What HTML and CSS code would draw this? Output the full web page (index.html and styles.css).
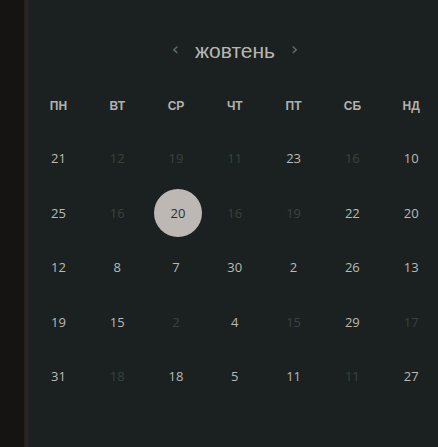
FILE: index.html
```html
<!DOCTYPE html>
<html lang="uk">
<head>
<meta charset="utf-8">
<link rel="stylesheet" href="styles.css">
</head>
<body>
<div class="sidebar"></div>
<div class="edge"></div>
<main class="panel">
  <div class="header">
    <span class="chev">&lsaquo;</span>
    <span class="month">жовтень</span>
    <span class="chev">&rsaquo;</span>
  </div>
  <div class="weekdays">
    <span>ПН</span><span>ВТ</span><span>СР</span><span>ЧТ</span><span>ПТ</span><span>СБ</span><span>НД</span>
  </div>
  <div class="days">
    <span>21</span><span class="dim">12</span><span class="dim">19</span><span class="dim">11</span><span>23</span><span class="dim">16</span><span>10</span>
    <span>25</span><span class="dim">16</span><span class="sel"><b>20</b></span><span class="dim">16</span><span class="dim">19</span><span>22</span><span>20</span>
    <span>12</span><span>8</span><span>7</span><span>30</span><span>2</span><span>26</span><span>13</span>
    <span>19</span><span>15</span><span class="dim">2</span><span>4</span><span class="dim">15</span><span>29</span><span class="dim">17</span>
    <span>31</span><span class="dim">18</span><span>18</span><span>5</span><span>11</span><span class="dim">11</span><span>27</span>
  </div>
</main>
</body>
</html>
```
FILE: styles.css
```css
html, body {
  margin: 0;
  height: 100%;
}
body {
  display: flex;
  background: #1a2120;
  overflow: hidden;
}
.sidebar {
  width: 24px;
  flex: none;
  background: #161412;
}
.edge {
  width: 5px;
  flex: none;
  background: linear-gradient(to right, #221f1d, #2a2726 60%, #1e2220);
}
.panel {
  flex: 1;
  min-width: 0;
  overflow: hidden;
  padding-top: 36px;
}
.header {
  width: 412px;
  height: 30px;
  display: flex;
  align-items: center;
  justify-content: center;
  gap: 16px;
}
.month {
  font-family: "Liberation Sans", Arial, sans-serif;
  font-size: 21px;
  color: #b9b6b1;
  line-height: 30px;
}
.chev {
  font-family: "DejaVu Sans", sans-serif;
  font-size: 18px;
  color: #6a6e6b;
  line-height: 30px;
  margin-top: -4px;
}
.weekdays, .days {
  width: 412px;
  display: grid;
  grid-template-columns: repeat(7, 58.8px);
}
.weekdays {
  margin-top: 28px;
  height: 24px;
  align-items: center;
  justify-items: center;
  font-family: "Liberation Sans", Arial, sans-serif;
  font-weight: bold;
  font-size: 12px;
  color: #b2b1ac;
}
.days {
  margin-top: 13px;
  grid-auto-rows: 54.5px;
  align-items: center;
  justify-items: center;
  font-family: "Open Sans", sans-serif;
  font-size: 13px;
  color: #bcb9b4;
}
.days .dim {
  color: #3b413f;
}
.days .sel {
  width: 48px;
  height: 48px;
  margin-left: 4px;
  border-radius: 50%;
  background: #bdb8b3;
  color: #2b302e;
  display: flex;
  align-items: center;
  justify-content: center;
}
.days .sel b {
  font-weight: normal;
}
```
